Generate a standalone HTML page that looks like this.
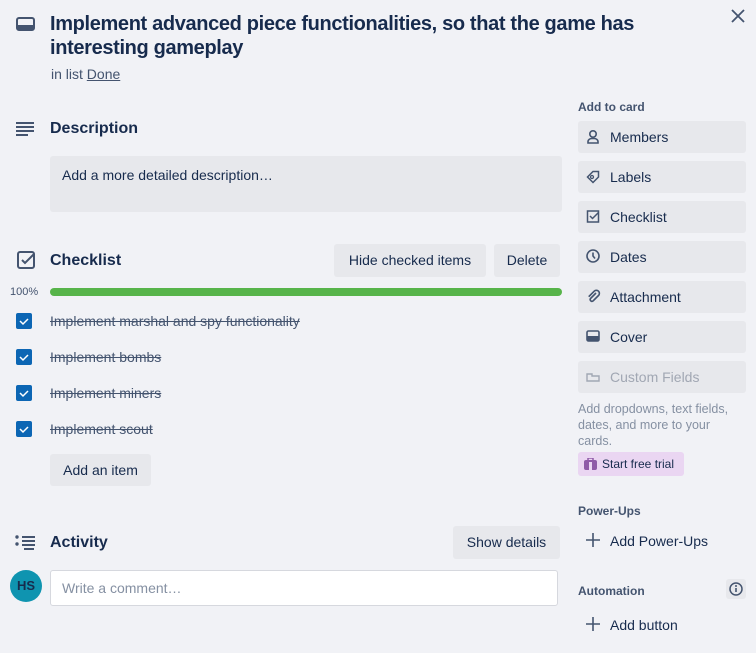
<!DOCTYPE html>
<html><head><style>
body{margin:0;width:756px;height:653px;background:#f1f2f6;font-family:"Liberation Sans",sans-serif;color:#172b4d;position:relative;overflow:hidden}
.a{position:absolute}
.btn{position:absolute;background:#e7e8ec;border-radius:3px;font-size:14px;color:#172b4d;box-sizing:border-box}
.sb{left:578px;width:168px;height:32px;padding-left:32px;line-height:32px}
.sb svg{position:absolute;left:8px;top:8px}
h3{margin:0;position:absolute;font-size:16px;font-weight:bold}
.cb{position:absolute;left:16px;width:16px;height:16px;background:#0c66b4;border-radius:2px}
.it{position:absolute;left:50px;font-size:14px;color:#44546f;text-decoration:line-through}
.lbl{position:absolute;left:578px;font-size:12px;font-weight:bold;color:#44546f}
</style></head><body>
<svg class="a" style="left:16px;top:16px" width="20" height="16" viewBox="0 0 20 16"><rect x="1" y="2" width="17" height="12" rx="2" fill="none" stroke="#44546f" stroke-width="2"/><rect x="1" y="9" width="17" height="5" fill="#44546f"/></svg>
<div class="a" style="left:50px;top:12px;width:640px;font-size:20px;font-weight:bold;line-height:24px;letter-spacing:-0.35px">Implement advanced piece functionalities, so that the game has interesting gameplay</div>
<div class="a" style="left:51px;top:66px;font-size:14px;color:#44546f">in list <span style="text-decoration:underline">Done</span></div>
<svg class="a" style="left:731px;top:9px" width="14" height="14"><path d="M1 1l12 12M13 1L1 13" stroke="#44546f" stroke-width="1.8"/></svg>

<svg class="a" style="left:16px;top:121px" width="19" height="16"><g stroke="#44546f" stroke-width="2"><path d="M0 2h18M0 6h18M0 10h18M0 14h12"/></g></svg>
<h3 style="left:50px;top:120px">Description</h3>
<div class="btn" style="left:50px;top:156px;width:512px;height:56px;padding:11px 12px">Add a more detailed description…</div>

<svg class="a" style="left:17px;top:251px" width="20" height="20"><rect x="1" y="1" width="16" height="16" rx="2" fill="none" stroke="#44546f" stroke-width="2"/><path d="M5 9l3 3 9-9" fill="none" stroke="#44546f" stroke-width="2"/></svg>
<h3 style="left:50px;top:252px">Checklist</h3>
<div class="btn" style="left:334px;top:244px;width:152px;height:33px;line-height:33px;text-align:center">Hide checked items</div>
<div class="btn" style="left:494px;top:244px;width:66px;height:33px;line-height:33px;text-align:center">Delete</div>
<div class="a" style="left:10px;top:286px;font-size:11px;color:#44546f">100%</div>
<div class="a" style="left:50px;top:288px;width:512px;height:8px;border-radius:4px;background:#57b44a"></div>
<div class="cb" style="top:313px"></div><div class="cb" style="top:349px"></div><div class="cb" style="top:385px"></div><div class="cb" style="top:421px"></div>
<svg class="a" style="left:16px;top:313px" width="16" height="124"><g fill="none" stroke="#fff" stroke-width="1.5"><path d="M4 8l3 3 5-5"/><path d="M4 44l3 3 5-5"/><path d="M4 80l3 3 5-5"/><path d="M4 116l3 3 5-5"/></g></svg>
<div class="it" style="top:313px">Implement marshal and spy functionality</div>
<div class="it" style="top:349px">Implement bombs</div>
<div class="it" style="top:385px">Implement miners</div>
<div class="it" style="top:421px">Implement scout</div>
<div class="btn" style="left:50px;top:454px;width:101px;height:32px;line-height:32px;text-align:center">Add an item</div>

<svg class="a" style="left:15px;top:535px" width="22" height="16"><g fill="#44546f"><circle cx="2" cy="2" r="1.7"/><circle cx="2" cy="9" r="1.7"/></g><g stroke="#44546f" stroke-width="2"><path d="M7 2h13M7 6h13M7 10h13M9 14h10"/></g></svg>
<h3 style="left:50px;top:534px">Activity</h3>
<div class="btn" style="left:453px;top:526px;width:107px;height:33px;line-height:33px;text-align:center">Show details</div>
<div class="a" style="left:10px;top:570px;width:32px;height:32px;border-radius:50%;background:#0f94b0;color:#172b4d;font-size:13px;font-weight:bold;line-height:32px;text-align:center">HS</div>
<div class="a" style="left:50px;top:570px;width:508px;height:36px;box-sizing:border-box;background:#fff;border:1px solid #d6d8de;border-radius:3px;padding-left:11px;line-height:34px;font-size:14px;color:#8590a2">Write a comment…</div>

<div class="lbl" style="top:100px">Add to card</div>
<div class="btn sb" style="top:121px"><svg width="16" height="16"><circle cx="7" cy="5" r="3.2" fill="none" stroke="#44546f" stroke-width="1.6"/><path d="M2 14v-1.5a4 3 0 0 1 4-3h2a4 3 0 0 1 4 3V14z" fill="none" stroke="#44546f" stroke-width="1.6"/></svg>Members</div>
<div class="btn sb" style="top:161px"><svg width="16" height="16"><path d="M1.5 8L7 2.5h5.5V8L7 13.5z" fill="none" stroke="#44546f" stroke-width="1.5"/><circle cx="6" cy="8" r="1.5" fill="none" stroke="#44546f" stroke-width="1.3"/></svg>Labels</div>
<div class="btn sb" style="top:201px"><svg width="16" height="16"><rect x="1.5" y="2" width="11" height="11" fill="none" stroke="#44546f" stroke-width="1.5"/><path d="M4 7l2.5 2.5 6-6" fill="none" stroke="#44546f" stroke-width="1.5"/></svg>Checklist</div>
<div class="btn sb" style="top:241px"><svg width="16" height="16"><circle cx="7" cy="7" r="6" fill="none" stroke="#44546f" stroke-width="1.6"/><path d="M7 3.5V7l2 2.5" fill="none" stroke="#44546f" stroke-width="1.6"/></svg>Dates</div>
<div class="btn sb" style="top:281px"><svg width="16" height="16"><path d="M10 4L4.5 9.5a1.8 1.8 0 0 0 2.5 2.5L12.5 6.5a3 3 0 0 0-4.3-4.3L2.7 7.7" fill="none" stroke="#44546f" stroke-width="1.6"/></svg>Attachment</div>
<div class="btn sb" style="top:321px"><svg width="16" height="16"><rect x="1" y="2" width="12" height="10" rx="1.5" fill="none" stroke="#44546f" stroke-width="1.6"/><rect x="1" y="7" width="12" height="5" fill="#44546f"/></svg>Cover</div>
<div class="btn sb" style="top:361px;color:#a1a7b3"><svg width="16" height="16"><path d="M1 5h5v2h7v5H1z" fill="none" stroke="#a1a7b3" stroke-width="1.4"/></svg>Custom Fields</div>
<div class="a" style="left:578px;top:401px;width:168px;font-size:12.5px;line-height:16px;color:#8590a2">Add dropdowns, text fields, dates, and more to your cards.</div>
<div class="a" style="left:578px;top:452px;width:106px;height:24px;background:#ead6f2;border-radius:3px;font-size:12px;line-height:24px;padding-left:24px;box-sizing:border-box;color:#172b4d"><svg class="a" style="left:6px;top:6px" width="13" height="12"><rect x="0" y="2" width="13" height="10" rx="2" fill="#8f5ba8"/><rect x="4" y="0" width="5" height="4" fill="none" stroke="#8f5ba8" stroke-width="1.5"/><rect x="5" y="4" width="3" height="8" fill="#ead6f2"/></svg>Start free trial</div>

<div class="lbl" style="top:504px">Power-Ups</div>
<svg class="a" style="left:586px;top:533px" width="14" height="14"><path d="M7 0v14M0 7h14" stroke="#44546f" stroke-width="1.6"/></svg>
<div class="a" style="left:610px;top:533px;font-size:14px">Add Power-Ups</div>
<div class="lbl" style="top:584px">Automation</div>
<div class="a" style="left:726px;top:579px;width:20px;height:20px;background:#e7e8ec;border-radius:3px"><svg width="20" height="20"><circle cx="10" cy="10" r="6" fill="none" stroke="#44546f" stroke-width="1.5"/><path d="M10 9v4" stroke="#44546f" stroke-width="1.6"/><circle cx="10" cy="7" r="1" fill="#44546f"/></svg></div>
<svg class="a" style="left:586px;top:617px" width="14" height="14"><path d="M7 0v14M0 7h14" stroke="#44546f" stroke-width="1.6"/></svg>
<div class="a" style="left:610px;top:617px;font-size:14px">Add button</div>
</body></html>
